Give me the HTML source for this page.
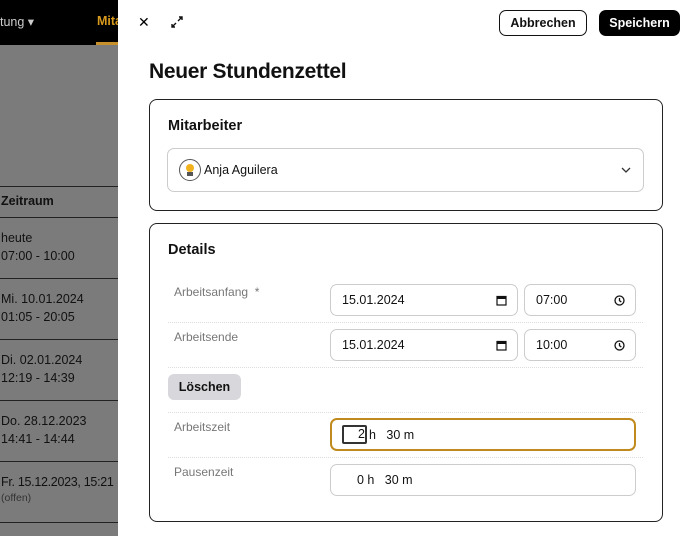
<!DOCTYPE html><html><head><style>
*{box-sizing:border-box;margin:0;padding:0}
body{width:688px;height:536px;overflow:hidden;position:relative;font-family:"Liberation Sans",sans-serif;background:#fff}
.left{position:absolute;left:0;top:0;width:118px;height:536px;background:#7b7b7b;color:#111;font-size:12.5px;overflow:hidden;white-space:nowrap}
.hdr{position:absolute;left:0;top:0;width:118px;height:45px;background:#000;color:#ccc;font-size:12.5px}
.ab{position:absolute;white-space:nowrap}
.line{position:absolute;left:0;width:118px;height:1px;background:#222}
.panel{position:absolute;left:118px;top:0;width:570px;height:536px;background:#fff}
.btn{position:absolute;top:10px;height:26px;border-radius:7px;font-size:12.5px;font-weight:bold;display:flex;align-items:center;justify-content:center}
.card{position:absolute;left:149px;width:514px;border:1.5px solid #222;border-radius:8px}
.h{position:absolute;font-size:14.5px;font-weight:bold;color:#111}
.lab{position:absolute;left:174px;font-size:12px;color:#777}
.in{position:absolute;border:1px solid #ccc;border-radius:7px;font-size:12.5px;color:#111;display:flex;align-items:center;padding-left:11px}
.dv{position:absolute;left:168px;width:475px;border-top:1px dotted #ddd}
.ic{position:absolute;right:10px;top:10px}
</style></head><body>
<div class="left">
<div class="hdr"><span class="ab" style="left:0;top:14px">tung ▾</span><span class="ab" style="left:97px;top:14px;color:#d89a1e;font-weight:bold">Mita</span><div class="ab" style="left:96px;top:42px;width:22px;height:3px;background:#c8902a"></div></div>
<div class="line" style="top:186px"></div>
<span class="ab" style="left:1px;top:194px;font-weight:bold">Zeitraum</span>
<div class="line" style="top:217px"></div>
<span class="ab" style="left:1px;top:231px">heute</span><span class="ab" style="left:1px;top:249px">07:00 - 10:00</span>
<div class="line" style="top:278px"></div>
<span class="ab" style="left:1px;top:292px">Mi. 10.01.2024</span><span class="ab" style="left:1px;top:310px">01:05 - 20:05</span>
<div class="line" style="top:339px"></div>
<span class="ab" style="left:1px;top:353px">Di. 02.01.2024</span><span class="ab" style="left:1px;top:371px">12:19 - 14:39</span>
<div class="line" style="top:400px"></div>
<span class="ab" style="left:1px;top:414px">Do. 28.12.2023</span><span class="ab" style="left:1px;top:432px">14:41 - 14:44</span>
<div class="line" style="top:461px"></div>
<span class="ab" style="left:1px;top:475px;letter-spacing:-0.3px">Fr. 15.12.2023, 15:21</span><span class="ab" style="left:1px;top:492px;font-size:10.5px;color:#333">(offen)</span>
<div class="line" style="top:522px"></div>
</div>
<div class="panel"></div>
<span class="ab" style="left:138px;top:14px;font-size:14px">✕</span>
<svg class="ab" style="left:170px;top:15px" width="14" height="14" viewBox="0 0 14 14" fill="none" stroke="#111" stroke-width="1.4"><path d="M8 6L12 2M9 2h3v3M6 8L2 12M2 9v3h3"/></svg>
<div class="btn" style="left:499px;width:88px;border:1.5px solid #111;color:#111">Abbrechen</div>
<div class="btn" style="left:599px;width:81px;background:#000;color:#fff">Speichern</div>
<div class="ab" style="left:149px;top:60px;font-size:21px;font-weight:bold;color:#111;letter-spacing:-0.3px">Neuer Stundenzettel</div>
<div class="card" style="top:99px;height:112px"></div>
<div class="h" style="left:168px;top:118px">Mitarbeiter</div>
<div class="in" style="left:167px;top:148px;width:477px;height:44px;padding-left:11px"><span style="display:inline-block;width:22px;height:22px;border:1.5px solid #555;border-radius:50%;margin-right:3px;position:relative"><span style="position:absolute;left:6px;top:4px;width:8px;height:8px;border-radius:50%;background:#f2b21e"></span><span style="position:absolute;left:7px;top:12px;width:6px;height:4px;background:#555"></span></span>Anja Aguilera<svg class="ab" style="right:12px;top:17px" width="10" height="8" viewBox="0 0 10 8" fill="none" stroke="#333" stroke-width="1.3"><path d="M1 2l4 4 4-4"/></svg></div>
<div class="card" style="top:223px;height:299px"></div>
<div class="h" style="left:168px;top:242px">Details</div>
<div class="lab" style="top:285px">Arbeitsanfang &nbsp;*</div>
<div class="in" style="left:330px;top:284px;width:188px;height:32px">15.01.2024<svg class="ic" width="11" height="11" viewBox="0 0 11 11"><rect x="1" y="1.5" width="9" height="8.5" fill="none" stroke="#111" stroke-width="1.2"/><rect x="1" y="1.5" width="9" height="2.5" fill="#111"/></svg></div>
<div class="in" style="left:524px;top:284px;width:112px;height:32px">07:00<svg class="ic" width="11" height="11" viewBox="0 0 11 11" fill="none" stroke="#111" stroke-width="1.3"><circle cx="5.5" cy="5.5" r="4.5"/><path d="M5.5 3v2.7l1.8 1.3"/></svg></div>
<div class="dv" style="top:322px"></div>
<div class="lab" style="top:330px">Arbeitsende</div>
<div class="in" style="left:330px;top:329px;width:188px;height:32px">15.01.2024<svg class="ic" width="11" height="11" viewBox="0 0 11 11"><rect x="1" y="1.5" width="9" height="8.5" fill="none" stroke="#111" stroke-width="1.2"/><rect x="1" y="1.5" width="9" height="2.5" fill="#111"/></svg></div>
<div class="in" style="left:524px;top:329px;width:112px;height:32px">10:00<svg class="ic" width="11" height="11" viewBox="0 0 11 11" fill="none" stroke="#111" stroke-width="1.3"><circle cx="5.5" cy="5.5" r="4.5"/><path d="M5.5 3v2.7l1.8 1.3"/></svg></div>
<div class="dv" style="top:367px"></div>
<div class="ab" style="left:168px;top:374px;width:73px;height:26px;background:#d8d8dc;border-radius:6px;font-size:12.5px;font-weight:bold;display:flex;align-items:center;justify-content:center;color:#111">Löschen</div>
<div class="dv" style="top:412px"></div>
<div class="lab" style="top:420px">Arbeitszeit</div>
<div class="in" style="left:330px;top:418px;width:306px;height:33px;border:2px solid #c08a1e;padding-left:10px"><span style="display:inline-block;width:25px;height:19px;border:2px solid #333;border-radius:2px;text-align:right;line-height:15px;margin-right:2px">2</span>h &nbsp; 30 m</div>
<div class="dv" style="top:457px"></div>
<div class="lab" style="top:465px">Pausenzeit</div>
<div class="in" style="left:330px;top:464px;width:306px;height:32px;padding-left:26px">0 h &nbsp; 30 m</div>
</body></html>
